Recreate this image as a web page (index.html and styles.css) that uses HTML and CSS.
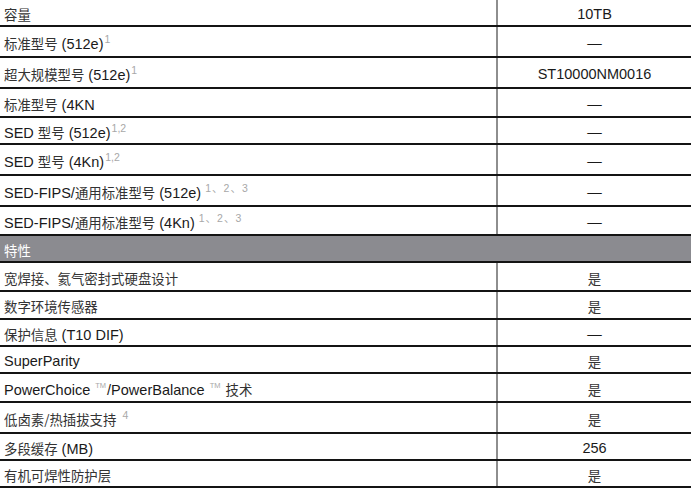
FILE: index.html
```html
<!DOCTYPE html>
<html lang="zh">
<head>
<meta charset="utf-8">
<link rel="stylesheet" href="styles.css">
</head>
<body>
<div class="spec">
  <div class="row h27"><div class="lab"><span class="zh">容量</span></div><div class="val">10TB</div></div>
  <div class="row h31"><div class="lab"><span><span class="zh">标准型号</span> (512e)<sup>1</sup></span></div><div class="val">—</div></div>
  <div class="row h31"><div class="lab"><span><span class="zh">超大规模型号</span> (512e)<sup>1</sup></span></div><div class="val">ST10000NM0016</div></div>
  <div class="row h29"><div class="lab"><span><span class="zh">标准型号</span> (4KN</span></div><div class="val">—</div></div>
  <div class="row h27"><div class="lab"><span>SED <span class="zh">型号</span> (512e)<sup>1,2</sup></span></div><div class="val">—</div></div>
  <div class="row h31"><div class="lab"><span>SED <span class="zh">型号</span> (4Kn)<sup>1,2</sup></span></div><div class="val">—</div></div>
  <div class="row h31"><div class="lab"><span>SED-FIPS/<span class="zh">通用标准型号</span> (512e)<sup class="wide">1、2、3</sup></span></div><div class="val">—</div></div>
  <div class="row h29"><div class="lab"><span>SED-FIPS/<span class="zh">通用标准型号</span> (4Kn)<sup class="wide">1、2、3</sup></span></div><div class="val">—</div></div>
  <div class="row head h27"><div class="lab"><span class="zh">特性</span></div></div>
  <div class="row h29"><div class="lab"><span class="zh">宽焊接、氦气密封式硬盘设计</span></div><div class="val"><span class="zh">是</span></div></div>
  <div class="row h28"><div class="lab"><span class="zh">数字环境传感器</span></div><div class="val"><span class="zh">是</span></div></div>
  <div class="row h27"><div class="lab"><span><span class="zh">保护信息</span> (T10 DIF)</span></div><div class="val">—</div></div>
  <div class="row h27"><div class="lab">SuperParity</div><div class="val"><span class="zh">是</span></div></div>
  <div class="row h29"><div class="lab"><span>PowerChoice<sup class="tm">TM</sup>/PowerBalance<sup class="tm">TM</sup> <span class="zh">技术</span></span></div><div class="val"><span class="zh">是</span></div></div>
  <div class="row h31"><div class="lab"><span><span class="zh">低卤素/热插拔支持</span><sup class="four">4</sup></span></div><div class="val"><span class="zh">是</span></div></div>
  <div class="row h27"><div class="lab"><span><span class="zh">多段缓存</span> (MB)</span></div><div class="val">256</div></div>
  <div class="row h27"><div class="lab"><span class="zh">有机可焊性防护层</span></div><div class="val"><span class="zh">是</span></div></div>
</div>
</body>
</html>
```

FILE: styles.css
```css
* { box-sizing: border-box; }
html, body { margin: 0; padding: 0; background: #fff; }
body {
  font-family: "Liberation Sans", "Noto Sans CJK SC", sans-serif;
  font-size: 14.5px;
  color: #1a1a1a;
}
.spec {
  width: 691px;
  display: flex;
  flex-direction: column;
}
.row {
  display: grid;
  grid-template-columns: 496px 1fr;
  border-bottom: 2px solid #141414;
}
.h27 { height: 27px; }
.h28 { height: 28px; }
.h29 { height: 29px; }
.h31 { height: 31px; }
.lab {
  display: flex;
  align-items: center;
  padding-left: 4px;
  padding-top: 2px;
  white-space: nowrap;
}
.val {
  display: flex;
  align-items: center;
  justify-content: center;
  border-left: 2px solid #8e8e8e;
  padding-top: 2px;
}
.zh {
  font-family: "Noto Sans CJK SC", sans-serif;
  font-size: 13.4px;
  color: #333;
}
sup {
  font-size: 10.5px;
  color: #a8a8a8;
  vertical-align: 6px;
  line-height: 0;
  margin-left: 1px;
}
sup.wide { margin-left: 4px; letter-spacing: 1px; }
sup.tm { font-size: 7.5px; margin-left: 5px; margin-right: 1px; vertical-align: 7px; }
sup.four { margin-left: 6px; }
.head {
  background: #8b8b90;
  border-top: 2px solid #141414;
  margin-top: -2px;
  height: 29px;
}
.head .zh { color: #fff; }
```
